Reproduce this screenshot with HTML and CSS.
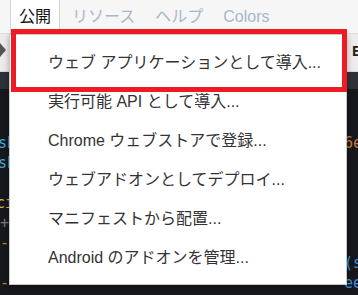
FILE: index.html
```html
<!DOCTYPE html>
<html lang="ja">
<head>
  <meta charset="UTF-8">
  <title>公開メニュー</title>
  <link rel="stylesheet" href="styles.css">
</head>
<body>

<div class="screen">
  <!-- top menu bar -->
  <div class="menubar">
    <div class="tab">公開</div>
    <div class="links">
      <span class="link">リソース</span>
      <span class="link">ヘルプ</span>
      <span class="link">Colors</span>
    </div>
  </div>

  <!-- editor behind the menu -->
  <div class="toolbar">
    <span class="play"></span>
    <span class="tool-e">E</span>
  </div>
  <div class="band"></div>
  <div class="code">
    <div class="line"><span class="c-cyan">sh</span><span class="c-orange">6e</span></div>
    <div class="line"><span class="c-cyan">sh</span><span></span></div>
    <div class="line"><span></span><span></span></div>
    <div class="line"><span class="c-yellow">ci</span><span></span></div>
    <div class="line"><span class="c-gray">+</span><span></span></div>
    <div class="line"><span class="c-orange">-</span><span></span></div>
    <div class="line"><span></span><span class="c-blue">(s</span></div>
    <div class="line"><span class="c-orange">-</span><span class="c-blue">ee</span></div>
  </div>

  <!-- dropdown -->
  <ul class="dropdown">
    <li>ウェブ アプリケーションとして導入...</li>
    <li>実行可能 API として導入...</li>
    <li>Chrome ウェブストアで登録...</li>
    <li>ウェブアドオンとしてデプロイ...</li>
    <li>マニフェストから配置...</li>
    <li>Android のアドオンを管理...</li>
  </ul>

  <!-- annotation -->
  <div class="highlight"></div>
</div>

</body>
</html>
```

FILE: styles.css
```css
body {
  margin: 0;
  font-family: 'Liberation Sans', 'Noto Sans CJK JP', sans-serif;
  background: #16181c;
}
.screen {
  position: relative;
  width: 358px;
  height: 295px;
  overflow: hidden;
}
.menubar {
  display: flex;
  height: 33px;
  padding-left: 10px;
  background: #f6f6f6;
  border-bottom: 1px solid #dcdcdc;
  font-size: 16px;
}
.tab {
  width: 50px;
  height: 34px;
  box-sizing: border-box;
  border-left: 1px solid #d6d6d6;
  border-right: 1px solid #d6d6d6;
  background: white;
  color: #111;
  text-align: center;
  line-height: 34px;
}
.links {
  display: flex;
  gap: 20px;
  padding-left: 12px;
  line-height: 34px;
}
.link {
  color: #a9b7c9;
}
.toolbar {
  display: flex;
  justify-content: space-between;
  align-items: center;
  height: 37px;
  background: #ececec;
  border-bottom: 1px solid #d8d8d8;
}
.play {
  width: 0;
  height: 0;
  border-top: 7px solid transparent;
  border-bottom: 7px solid transparent;
  border-left: 6px solid #555;
  margin-top: -6px;
}
.tool-e {
  font-weight: bold;
  font-size: 15px;
  color: #222;
  margin-right: -4px;
  margin-top: -4px;
}
.band {
  height: 17px;
  background: #2e3238;
}
.code {
  padding-top: 44px;
  font-family: 'DejaVu Sans Mono', monospace;
  font-size: 15px;
}
.line {
  display: flex;
  justify-content: space-between;
  height: 20px;
  line-height: 20px;
}
.c-cyan { color: #3fa9d6; margin-left: -2px; }
.c-orange { color: #c7783a; margin-right: -4px; }
.c-yellow { color: #d6b84a; margin-left: -4px; }
.c-gray { color: #777; }
.c-blue { color: #3f8fd0; margin-right: -4px; }
.dropdown {
  position: absolute;
  left: 9px;
  top: 34px;
  width: 338px;
  height: 251px;
  box-sizing: border-box;
  margin: 0;
  padding: 8px 0 0;
  list-style: none;
  background: white;
  border: 1px solid #c8c8c8;
  box-shadow: 0 2px 6px rgba(0,0,0,0.3);
}
.dropdown li {
  height: 39px;
  line-height: 39px;
  padding-left: 38px;
  font-size: 16px;
  color: #333;
  white-space: nowrap;
}
.highlight {
  position: absolute;
  left: 11px;
  top: 29px;
  width: 336px;
  height: 63px;
  box-sizing: border-box;
  border: 5px solid #ed1c24;
}
```
